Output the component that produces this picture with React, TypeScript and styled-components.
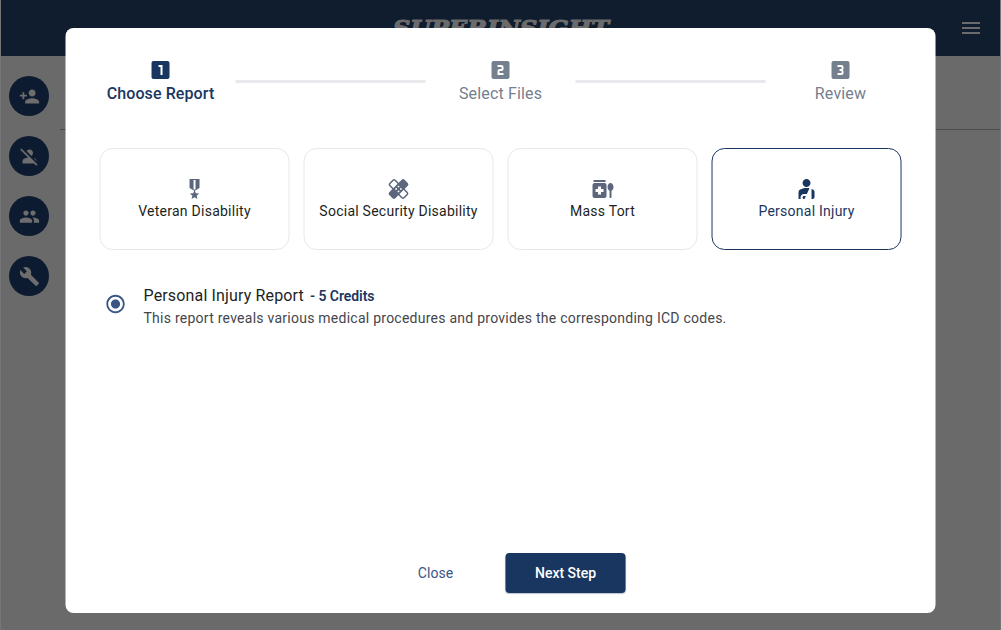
import React from 'react';
import styled, { createGlobalStyle } from 'styled-components';
import {
  MdPersonAdd, MdPersonOff, MdPeople, MdBuild, MdMenu, MdLooksOne, MdLooksTwo, MdLooks3,
  MdMedicationLiquid, MdPersonalInjury, MdRadioButtonChecked, MdMilitaryTech,
} from 'react-icons/md';

const navy = '#193661';

const GlobalStyle = createGlobalStyle`
  * { box-sizing: border-box; }
  body { margin: 0; font-family: Roboto, sans-serif; background: #6a6a6a; overflow: hidden; }
  button { font: inherit; border: 0; background: none; padding: 0; cursor: pointer; }
  svg { display: block; flex: none; }
`;

const Page = styled.div`
  position: relative;
  width: 1001px;
  height: 630px;
  overflow: hidden;
  display: flex;
  flex-direction: column;
  background: #6a6a6a;
  border-left: 1px solid #747678;
  border-right: 1px solid #747678;
`;

const Header = styled.header`
  flex: 0 0 56px;
  margin: 0 0 0 -1px;
  padding: 0 17px;
  display: grid;
  grid-template-columns: 1fr auto 1fr;
  align-items: center;
  background: #0f1d2e;
  color: #6b6b6b;
`;

const Logo = styled.h1`
  grid-column: 2;
  margin: 0 0 0 4px;
  width: 218px;
  height: 20px;
  svg { overflow: visible; }
  text { font: italic bold 23px 'DejaVu Serif', serif; fill: currentColor; stroke: currentColor; stroke-width: 1.2px; }
`;

const MenuButton = styled.button`
  justify-self: end;
  color: inherit;
`;

const Main = styled.div`
  flex: 1;
  display: flex;
`;

const Sidebar = styled.nav`
  width: 59px;
  padding: 20px 0 0 8px;
  display: flex;
  flex-direction: column;
  gap: 20px;
`;

const SideButton = styled.button`
  width: 40px;
  height: 40px;
  border-radius: 50%;
  display: grid;
  place-items: center;
  background: #0d1b31;
  color: #6d6d6d;
`;

const Content = styled.main`
  flex: 1;
  height: 74px;
  border-bottom: 1px solid #4c4c4c;
`;

const Overlay = styled.div`
  position: absolute;
  inset: 0 -1px;
  display: flex;
  justify-content: center;
  align-items: flex-start;
  padding-top: 28px;
`;

const Dialog = styled.section`
  width: 870px;
  height: 585px;
  border-radius: 8px;
  background: #fff;
  display: flex;
  flex-direction: column;
  transform: translateX(-0.48px);
`;

const Stepper = styled.div`
  padding: 30px 20px 0;
  height: 120px;
  display: flex;
`;

const Step = styled.div<{ $active?: boolean }>`
  width: 150px;
  display: flex;
  flex-direction: column;
  align-items: center;
  font-size: 16px;
  line-height: 24px;
  text-indent: 1px;
  letter-spacing: ${p => (p.$active ? '0.1px' : '0.15px')};
  font-weight: ${p => (p.$active ? 500 : 400)};
  color: ${p => (p.$active ? navy : '#75808f')};
`;

const Connector = styled.div`
  width: 190px;
  height: 3px;
  margin-top: 22px;
  background: #e7e9ec;
`;

const Cards = styled.div`
  display: flex;
  gap: 14px;
  padding: 0 34px;
`;

const Card = styled.button<{ $selected?: boolean }>`
  width: 190px;
  height: 102px;
  border: 1px solid ${p => (p.$selected ? navy : '#e7e8ed')};
  border-radius: 13px;
  display: flex;
  flex-direction: column;
  align-items: center;
  padding-top: 28px;
  font-size: 14px;
  line-height: 20px;
  text-indent: 1px;
  letter-spacing: 0.25px;
  color: ${p => (p.$selected ? navy : '#1d1f23')};
  svg { color: ${p => (p.$selected ? navy : '#5c677d')}; }
`;

const Option = styled.label`
  display: flex;
  align-items: center;
  gap: 17px;
  padding: 34px 39px 0;
  text-indent: 0.5px;
  svg { color: #395687; margin-top: -4px; }
`;

const OptionTitle = styled.div`
  font-size: 16px;
  line-height: 24px;
  letter-spacing: 0.15px;
  color: #1d1f23;
`;

const Credits = styled.span`
  margin-left: 6px;
  font-size: 14px;
  font-weight: 600;
  letter-spacing: -0.05px;
  color: ${navy};
`;

const OptionText = styled.div`
  font-size: 14px;
  line-height: 20px;
  letter-spacing: 0.25px;
  color: #44464c;
`;

const Footer = styled.footer`
  margin-top: auto;
  padding: 0 0 20px 300px;
  display: flex;
`;

const Action = styled.button<{ $primary?: boolean }>`
  width: ${p => (p.$primary ? 120 : 140)}px;
  height: 40px;
  border-radius: 4px;
  font-size: 14px;
  text-indent: 1px;
  font-weight: ${p => (p.$primary ? 500 : 400)};
  letter-spacing: ${p => (p.$primary ? 0 : 0.1)}px;
  color: ${p => (p.$primary ? '#fff' : '#395687')};
  background: ${p => (p.$primary ? navy : 'transparent')};
  box-shadow: ${p => (p.$primary ? '0 1px 1px rgba(25, 54, 97, 0.3)' : 'none')};
`;

const BandagesIcon = () => (
  <svg width="24" height="24" viewBox="0 0 24 24">
    <g transform="rotate(45 12 12)">
      <rect x="2" y="8.3" width="20" height="7.4" rx="1.4" fill="none" stroke="currentColor" strokeWidth="1.5" />
      <rect x="7.7" y="1.2" width="8.6" height="21.6" rx="2" fill="currentColor" />
    </g>
    <g fill="#fff">
      <circle cx="12" cy="9.6" r="0.9" /><circle cx="12" cy="14.4" r="0.9" />
      <circle cx="9.6" cy="12" r="0.9" /><circle cx="14.4" cy="12" r="0.9" />
    </g>
  </svg>
);

const reports = [
  { label: 'Veteran Disability', icon: <MdMilitaryTech size={24} /> },
  { label: 'Social Security Disability', icon: <BandagesIcon /> },
  { label: 'Mass Tort', icon: <MdMedicationLiquid size={24} /> },
  { label: 'Personal Injury', icon: <MdPersonalInjury size={24} />, selected: true },
];

export default function App() {
  return (
    <Page>
      <GlobalStyle />
      <Header>
        <Logo>
          <svg width="218" height="20">
            <text x="0" y="18" textLength="216" lengthAdjust="spacingAndGlyphs">SUPERINSIGHT</text>
          </svg>
        </Logo>
        <MenuButton aria-label="Menu"><MdMenu size={24} /></MenuButton>
      </Header>
      <Main>
        <Sidebar>
          {[MdPersonAdd, MdPersonOff, MdPeople, MdBuild].map((Icon, i) => (
            <SideButton key={i}><Icon size={21} /></SideButton>
          ))}
        </Sidebar>
        <Content />
      </Main>
      <Overlay>
        <Dialog role="dialog">
          <Stepper>
            <Step $active><MdLooksOne size={24} />Choose Report</Step>
            <Connector />
            <Step><MdLooksTwo size={24} />Select Files</Step>
            <Connector />
            <Step><MdLooks3 size={24} />Review</Step>
          </Stepper>
          <Cards>
            {reports.map(r => (
              <Card key={r.label} $selected={r.selected}>{r.icon}{r.label}</Card>
            ))}
          </Cards>
          <Option>
            <MdRadioButtonChecked size={22} />
            <div>
              <OptionTitle>Personal Injury Report<Credits>- 5 Credits</Credits></OptionTitle>
              <OptionText>This report reveals various medical procedures and provides the corresponding ICD codes.</OptionText>
            </div>
          </Option>
          <Footer>
            <Action>Close</Action>
            <Action $primary>Next Step</Action>
          </Footer>
        </Dialog>
      </Overlay>
    </Page>
  );
}
